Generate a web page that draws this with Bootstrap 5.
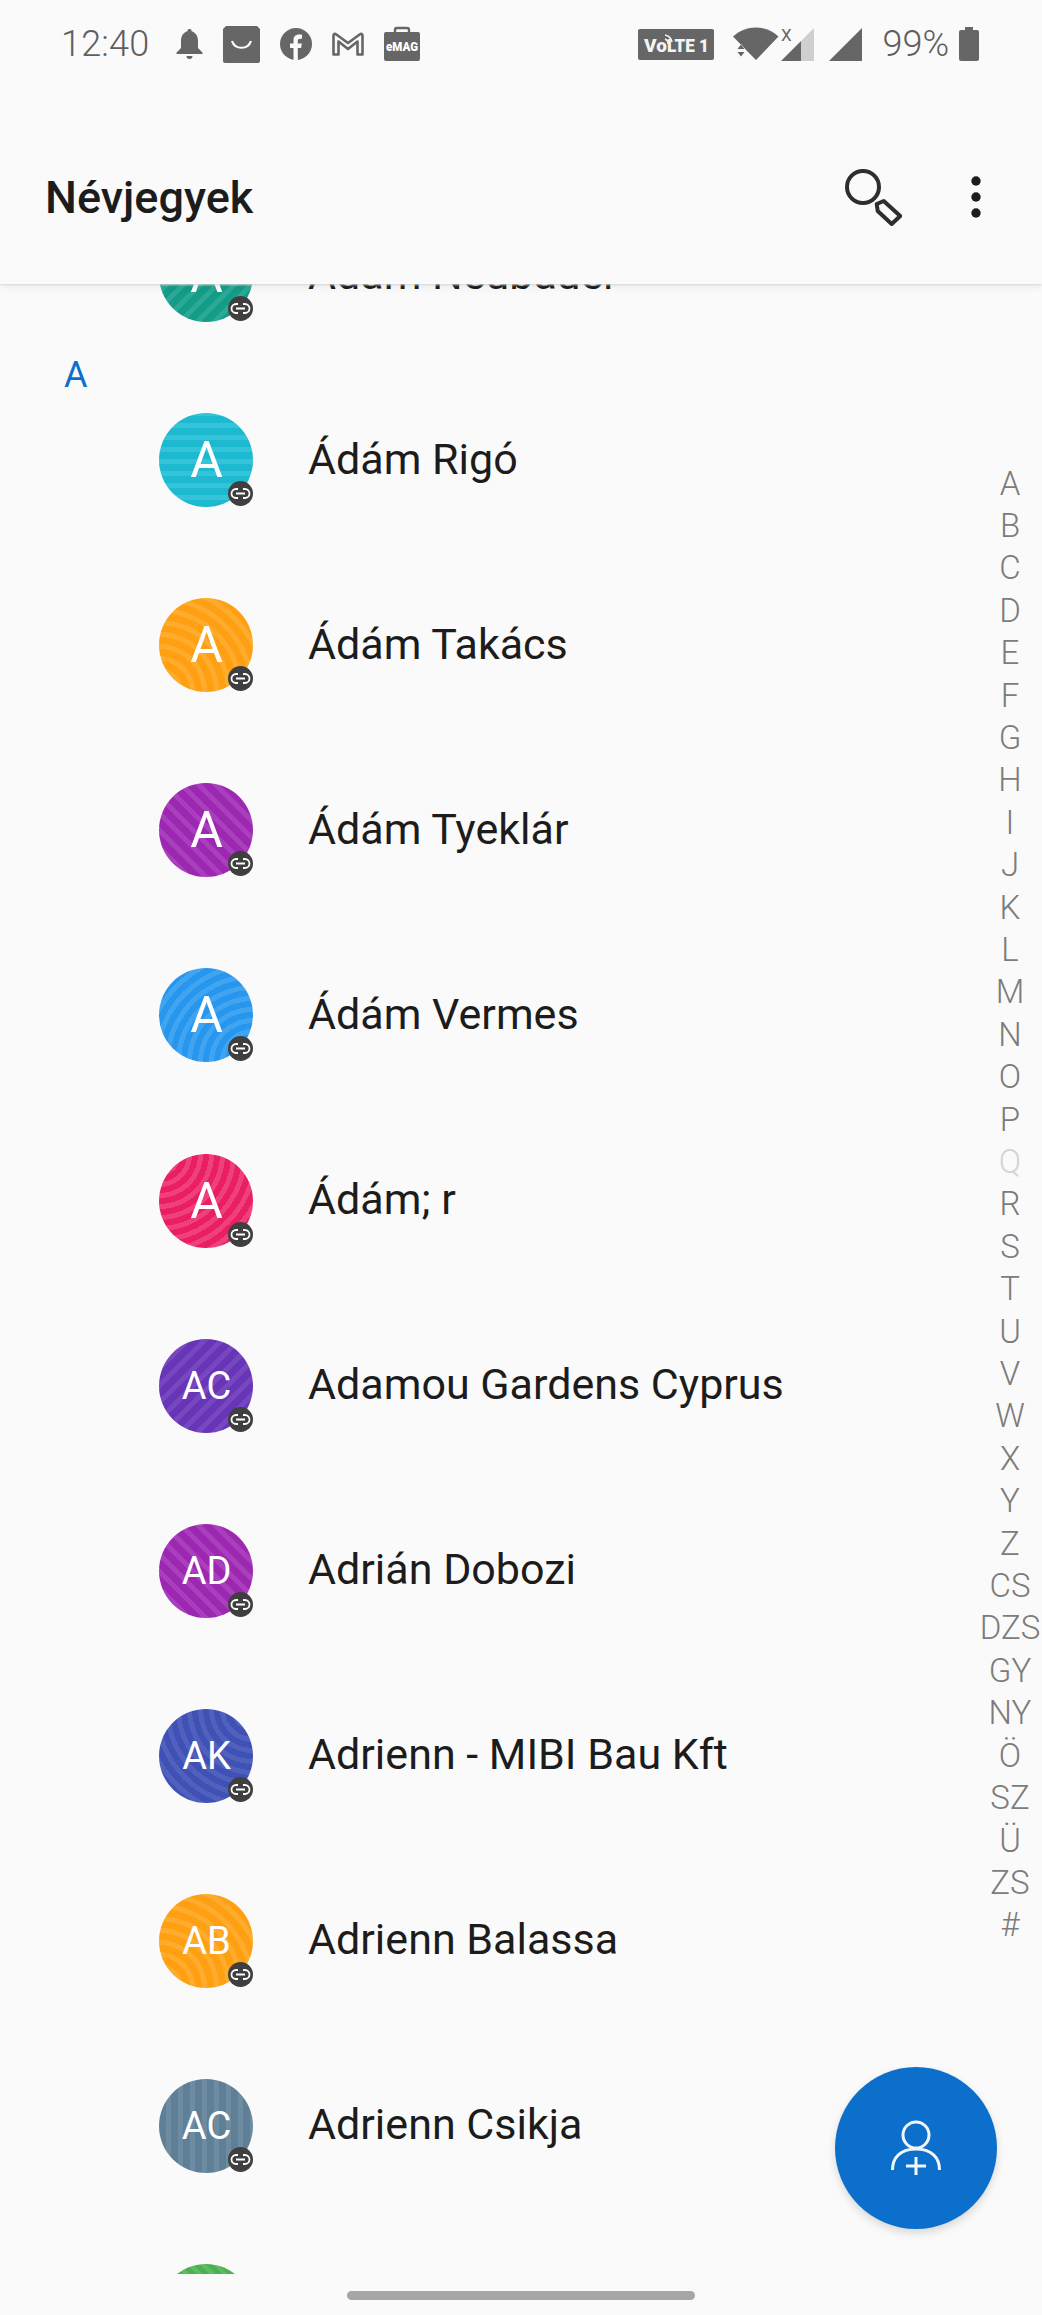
<!doctype html>
<html lang="hu">
<head>
<meta charset="utf-8">
<title>Névjegyek</title>
<link href="https://cdn.jsdelivr.net/npm/bootstrap@5.3.0/dist/css/bootstrap.min.css" rel="stylesheet">
<style>
html,body{height:2315px;overflow:hidden;background:#fafafa}
body{font-family:Roboto,"Liberation Sans",sans-serif;color:#1c1c1c}
.screen{width:1042px;height:2315px;overflow:hidden;background:#fafafa}
.topwrap{position:relative;z-index:2;background:#fafafa;height:284px;box-shadow:0 1px 2px #d8d8d8,0 3px 8px rgba(0,0,0,.06)}
.sbar{height:88px;padding:0 63px 0 61px;color:#666}
.sbar svg{display:block;flex:none;overflow:visible}
.clock{font-size:36px;font-weight:300;line-height:1;margin-right:27px;color:#5f5f5f;letter-spacing:.2px}
.gl{margin-right:20px}
.pct{font-size:36px;font-weight:300;line-height:1;color:#5f5f5f;margin:0 10px 0 20px}
.appbar{height:196px;padding:22px 61px 0 45px;flex-wrap:nowrap}
.apptitle{font-size:45px;font-weight:500;color:#1c1c1c;padding:0;margin:0;line-height:1}
.acts{gap:69px}
.plist{margin-top:-101.5px;height:2091.5px;overflow:hidden;border-radius:0}
.crow{height:185.1px;flex:none}
.lcol{width:159px;flex:none;align-self:flex-start;padding-left:64px}
.sect{display:block;font-size:36px;line-height:36px;margin-top:-11px;color:#0d6fcb}
.ava{width:94px;height:94px;flex:none;color:#fff;font-size:38px;line-height:1;margin-right:55px;padding-left:1px}
.one{font-size:50px}
.lnk{position:absolute;right:0;bottom:1px;width:25px;height:25px;background:#3f3f3f;border-radius:50%}
.lnk svg{display:block}
.nm{font-size:43px;line-height:1;color:#1c1c1c;margin-top:-2px}
.teal{background:repeating-linear-gradient(135deg,#149c89 0 7px,#2aa997 7px 12px)}
.cyan{background:repeating-linear-gradient(0deg,#1cb9d0 0 7px,#35c3d7 7px 12px)}
.orng{background:repeating-radial-gradient(circle at 0 100%,#ffa013 0 7px,#ffac2e 7px 12px)}
.purp{background:repeating-linear-gradient(45deg,#9c27b0 0 7px,#aa3fbd 7px 12px)}
.blue{background:repeating-radial-gradient(circle at 100% 100%,#2796ee 0 6px,#41a4f1 6px 11px)}
.pink{background:repeating-radial-gradient(circle at 0 0,#e91e63 0 6px,#ef3f7c 6px 11px)}
.deep{background:repeating-linear-gradient(135deg,#6735b5 0 7px,#7647c0 7px 12px)}
.indi{background:repeating-radial-gradient(circle at 100% 0,#3f51b5 0 6px,#5061bd 6px 11px)}
.slat{background:repeating-linear-gradient(90deg,#5f7f96 0 7px,#6d8ba1 7px 12px)}
.gren{background:repeating-linear-gradient(45deg,#4caf50 0 5px,#5ebb62 5px 9px)}
.idx{position:absolute;right:0;top:462.5px;width:64px;z-index:1;text-align:center;font-size:33px;font-weight:300;line-height:42.4px;color:#7c7c7c}
.idx .off{color:#d4d4d4}
.fab{position:absolute;right:45px;bottom:86px;width:162px;height:162px;padding:0;z-index:3;background:#0b6fcb;border:0;box-shadow:0 4px 8px rgba(0,0,0,.14)}
.fab:hover,.fab:active{background:#0b6fcb}
.navzone{height:41px;padding-top:17px}
.homebar{width:348px;height:9px;background:#a6a6a6;border-radius:5px}
</style>
</head>
<body>
<div class="screen position-relative">
  <header class="topwrap">
    <div class="sbar d-flex align-items-center">
      <span class="clock">12:40</span>
      <svg class="gl" width="27" height="32" viewBox="0 0 27 32" fill="#666"><path d="M13.500 1a2 2 0 0 1 2 2.300C20 4.500 22 8.500 22 13v7l4.500 4.500V26H.5v-1.500L5 20v-7c0-4.500 2-8.500 6.500-9.700A2 2 0 0 1 13.500 1z"/><path d="M10.500 28h6a3 3 0 0 1-6 0z"/></svg>
      <svg class="gl" width="37" height="38" viewBox="0 0 37 38"><path d="M3 1h31l3 3v32a2 2 0 0 1-2 2H2a2 2 0 0 1-2-2V4z" fill="#666"/><path d="M9 16c3 9 16 9 19 0" fill="none" stroke="#fff" stroke-width="2.200"/></svg>
      <svg class="gl" width="32" height="32" viewBox="0 0 32 32"><circle cx="16" cy="16" r="16" fill="#666"/><path d="M13.500 32V20H10v-4.500h3.500v-3.200C13.500 8.600 15.600 6.500 19 6.500c1.500 0 3 .2 3 .2v4h-2c-1.700 0-2.200 1-2.200 2.100v2.700h4l-.7 4.500h-3.300v12z" fill="#fafafa"/></svg>
      <svg class="gl" width="32" height="24" viewBox="0 0 32 24" fill="none" stroke="#666" stroke-width="2.600" stroke-linejoin="round"><path d="M1.500 22.500V3.500c0-1.500 1.500-2 2.500-1.200L16 11 28 2.300c1-.8 2.500-.3 2.500 1.200v19h-5V9.500L16 17 6.500 9.500v13z"/></svg>
      <svg width="36" height="34" viewBox="0 0 36 34"><path d="M11 6V3a2 2 0 0 1 2-2h10a2 2 0 0 1 2 2v3" fill="none" stroke="#666" stroke-width="2.400"/><rect y="5" width="36" height="29" rx="2" fill="#666"/><text x="18" y="23.500" text-anchor="middle" font-family="Roboto,sans-serif" font-weight="900" font-size="12" fill="#fff" textLength="32" lengthAdjust="spacingAndGlyphs">eMAG</text></svg>
      <span class="ms-auto"></span>
      <svg width="76" height="32" viewBox="0 0 76 32" class="me-3"><rect width="76" height="31" rx="2" y="1" fill="#666"/><text x="6" y="24" font-family="Roboto,sans-serif" font-weight="900" font-size="19" fill="#f4f4f4">Vo</text><path d="M27 11a5 5 0 0 1 3 5M27 7a9 9 0 0 1 7 7" fill="none" stroke="#f4f4f4" stroke-width="1.600"/><text x="29" y="24" font-family="Roboto,sans-serif" font-weight="900" font-size="19" fill="#f4f4f4" textLength="42" lengthAdjust="spacingAndGlyphs">LTE 1</text></svg>
      <svg width="46" height="34" viewBox="0 0 46 34" fill="#666" style="margin-left:3px"><path d="M0 9.500C13 -2.500 33 -2.500 45.500 9.500L23 33 15 25z"/><path d="M4 22l4-5 4 5zM4 25h8l-4 5z" fill="#fafafa"/><path d="M4.500 22l3.500-4.500 3.500 4.500zM4.500 25h7l-3.500 4.500z"/></svg>
      <svg width="34" height="34" viewBox="0 0 34 34" style="margin-left:2.500px"><path d="M33 1v33H20V14z" fill="#cfcfcf"/><path d="M20 14v20H0z" fill="#666"/><text x="0" y="14" font-family="Roboto,sans-serif" font-size="17" fill="#666">X</text></svg>
      <svg width="33" height="33" viewBox="0 0 33 33" style="margin-left:14px"><path d="M33 0v33H0z" fill="#666"/></svg>
      <span class="pct">99%</span>
      <svg width="20" height="34" viewBox="0 0 20 34" fill="#666"><path d="M6 0h8v3h4a2 2 0 0 1 2 2v27a2 2 0 0 1-2 2H2a2 2 0 0 1-2-2V5a2 2 0 0 1 2-2h4z"/></svg>
    </div>
    <nav class="navbar appbar align-items-center">
      <span class="navbar-brand apptitle">Névjegyek</span>
      <div class="d-flex align-items-center acts">
        <svg width="57" height="57" viewBox="0 0 57 57" fill="none" stroke="#2e2e2e" stroke-width="4" stroke-linejoin="round"><circle cx="18" cy="18" r="16"/><path d="M31.700 35l7-3 16.500 15-8.500 8-14-13z"/></svg>
        <svg width="10" height="42" viewBox="0 0 10 42" fill="#1c1c1c"><circle cx="5" cy="5" r="4.700"/><circle cx="5" cy="21" r="4.700"/><circle cx="5" cy="37" r="4.700"/></svg>
      </div>
    </nav>
  </header>

  <div class="list-group list-group-flush plist">
    <div class="list-group-item crow d-flex align-items-center border-0 bg-transparent p-0"><div class="lcol"></div><div class="ava one teal rounded-circle position-relative d-flex align-items-center justify-content-center">A<span class="lnk"><svg width="25" height="25" viewBox="0 0 25 25" fill="none" stroke="#fff" stroke-width="1.800"><path d="M10 8H8a4.500 4.500 0 0 0 0 9h2M15 8h2a4.500 4.500 0 0 1 0 9h-2M8 12.500h9"/></svg></span></div><div class="nm">Ádám Neubauer</div></div>
    <div class="list-group-item crow d-flex align-items-center border-0 bg-transparent p-0"><div class="lcol"><span class="sect">A</span></div><div class="ava one cyan rounded-circle position-relative d-flex align-items-center justify-content-center">A<span class="lnk"><svg width="25" height="25" viewBox="0 0 25 25" fill="none" stroke="#fff" stroke-width="1.800"><path d="M10 8H8a4.500 4.500 0 0 0 0 9h2M15 8h2a4.500 4.500 0 0 1 0 9h-2M8 12.500h9"/></svg></span></div><div class="nm">Ádám Rigó</div></div>
    <div class="list-group-item crow d-flex align-items-center border-0 bg-transparent p-0"><div class="lcol"></div><div class="ava one orng rounded-circle position-relative d-flex align-items-center justify-content-center">A<span class="lnk"><svg width="25" height="25" viewBox="0 0 25 25" fill="none" stroke="#fff" stroke-width="1.800"><path d="M10 8H8a4.500 4.500 0 0 0 0 9h2M15 8h2a4.500 4.500 0 0 1 0 9h-2M8 12.500h9"/></svg></span></div><div class="nm">Ádám Takács</div></div>
    <div class="list-group-item crow d-flex align-items-center border-0 bg-transparent p-0"><div class="lcol"></div><div class="ava one purp rounded-circle position-relative d-flex align-items-center justify-content-center">A<span class="lnk"><svg width="25" height="25" viewBox="0 0 25 25" fill="none" stroke="#fff" stroke-width="1.800"><path d="M10 8H8a4.500 4.500 0 0 0 0 9h2M15 8h2a4.500 4.500 0 0 1 0 9h-2M8 12.500h9"/></svg></span></div><div class="nm">Ádám Tyeklár</div></div>
    <div class="list-group-item crow d-flex align-items-center border-0 bg-transparent p-0"><div class="lcol"></div><div class="ava one blue rounded-circle position-relative d-flex align-items-center justify-content-center">A<span class="lnk"><svg width="25" height="25" viewBox="0 0 25 25" fill="none" stroke="#fff" stroke-width="1.800"><path d="M10 8H8a4.500 4.500 0 0 0 0 9h2M15 8h2a4.500 4.500 0 0 1 0 9h-2M8 12.500h9"/></svg></span></div><div class="nm">Ádám Vermes</div></div>
    <div class="list-group-item crow d-flex align-items-center border-0 bg-transparent p-0"><div class="lcol"></div><div class="ava one pink rounded-circle position-relative d-flex align-items-center justify-content-center">A<span class="lnk"><svg width="25" height="25" viewBox="0 0 25 25" fill="none" stroke="#fff" stroke-width="1.800"><path d="M10 8H8a4.500 4.500 0 0 0 0 9h2M15 8h2a4.500 4.500 0 0 1 0 9h-2M8 12.500h9"/></svg></span></div><div class="nm">Ádám; r</div></div>
    <div class="list-group-item crow d-flex align-items-center border-0 bg-transparent p-0"><div class="lcol"></div><div class="ava deep rounded-circle position-relative d-flex align-items-center justify-content-center">AC<span class="lnk"><svg width="25" height="25" viewBox="0 0 25 25" fill="none" stroke="#fff" stroke-width="1.800"><path d="M10 8H8a4.500 4.500 0 0 0 0 9h2M15 8h2a4.500 4.500 0 0 1 0 9h-2M8 12.500h9"/></svg></span></div><div class="nm">Adamou Gardens Cyprus</div></div>
    <div class="list-group-item crow d-flex align-items-center border-0 bg-transparent p-0"><div class="lcol"></div><div class="ava purp rounded-circle position-relative d-flex align-items-center justify-content-center">AD<span class="lnk"><svg width="25" height="25" viewBox="0 0 25 25" fill="none" stroke="#fff" stroke-width="1.800"><path d="M10 8H8a4.500 4.500 0 0 0 0 9h2M15 8h2a4.500 4.500 0 0 1 0 9h-2M8 12.500h9"/></svg></span></div><div class="nm">Adrián Dobozi</div></div>
    <div class="list-group-item crow d-flex align-items-center border-0 bg-transparent p-0"><div class="lcol"></div><div class="ava indi rounded-circle position-relative d-flex align-items-center justify-content-center">AK<span class="lnk"><svg width="25" height="25" viewBox="0 0 25 25" fill="none" stroke="#fff" stroke-width="1.800"><path d="M10 8H8a4.500 4.500 0 0 0 0 9h2M15 8h2a4.500 4.500 0 0 1 0 9h-2M8 12.500h9"/></svg></span></div><div class="nm">Adrienn - MIBI Bau Kft</div></div>
    <div class="list-group-item crow d-flex align-items-center border-0 bg-transparent p-0"><div class="lcol"></div><div class="ava orng rounded-circle position-relative d-flex align-items-center justify-content-center">AB<span class="lnk"><svg width="25" height="25" viewBox="0 0 25 25" fill="none" stroke="#fff" stroke-width="1.800"><path d="M10 8H8a4.500 4.500 0 0 0 0 9h2M15 8h2a4.500 4.500 0 0 1 0 9h-2M8 12.500h9"/></svg></span></div><div class="nm">Adrienn Balassa</div></div>
    <div class="list-group-item crow d-flex align-items-center border-0 bg-transparent p-0"><div class="lcol"></div><div class="ava slat rounded-circle position-relative d-flex align-items-center justify-content-center">AC<span class="lnk"><svg width="25" height="25" viewBox="0 0 25 25" fill="none" stroke="#fff" stroke-width="1.800"><path d="M10 8H8a4.500 4.500 0 0 0 0 9h2M15 8h2a4.500 4.500 0 0 1 0 9h-2M8 12.500h9"/></svg></span></div><div class="nm">Adrienn Csikja</div></div>
    <div class="list-group-item crow d-flex align-items-center border-0 bg-transparent p-0"><div class="lcol"></div><div class="ava gren rounded-circle position-relative"></div></div>
  </div>

  <div class="idx">
    <div>A</div><div>B</div><div>C</div><div>D</div><div>E</div><div>F</div><div>G</div><div>H</div><div>I</div><div>J</div><div>K</div><div>L</div><div>M</div><div>N</div><div>O</div><div>P</div><div class="off">Q</div><div>R</div><div>S</div><div>T</div><div>U</div><div>V</div><div>W</div><div>X</div><div>Y</div><div>Z</div><div>CS</div><div>DZS</div><div>GY</div><div>NY</div><div>Ö</div><div>SZ</div><div>Ü</div><div>ZS</div><div>#</div>
  </div>

  <button type="button" class="btn fab rounded-circle d-flex align-items-center justify-content-center" aria-label="Új névjegy">
    <svg width="50" height="56" viewBox="0 0 50 56" fill="none" stroke="#f2f7fc" stroke-width="3"><circle cx="25" cy="15" r="13"/><path d="M1.500 50C1.500 37 10 29 25 29s23.500 8 23.500 21"/><path d="M25 37v18M15 46h20"/></svg>
  </button>

  <div class="navzone d-flex justify-content-center"><div class="homebar"></div></div>
</div>
<script src="https://cdn.jsdelivr.net/npm/bootstrap@5.3.0/dist/js/bootstrap.bundle.min.js"></script>
</body>
</html>
